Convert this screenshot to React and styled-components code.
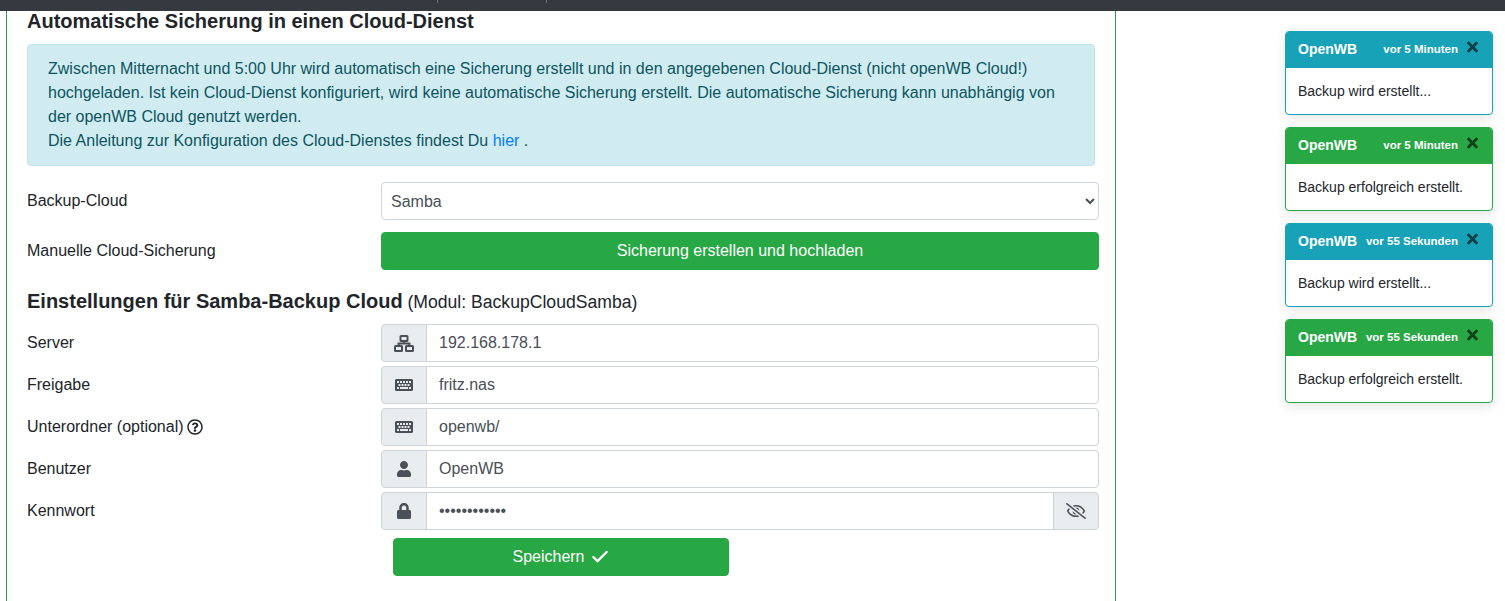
import React from 'react';
import styled, { createGlobalStyle } from 'styled-components';
import { FaKeyboard, FaUser, FaLock, FaRegEyeSlash, FaRegQuestionCircle, FaTimes } from 'react-icons/fa';
import { Check } from 'lucide-react';

const GlobalStyle = createGlobalStyle`
html, body {
  margin: 0;
  height: 100%;
  overflow: hidden;
  background: #fff;
  color: #212529;
  font-family: "Liberation Sans", Arial, sans-serif;
  font-size: 16px;
  line-height: 24px;
}
* { box-sizing: border-box; }
`
const TopBar = styled.div`
height: 11px;
background: #343a40;
display: flex;
align-items: flex-start;
`
const TopItem = styled.div`
width: ${props => props.width}px;
height: 3px;
border-right: 1px solid #6f7479;
`
const Card = styled.section`
margin-left: 6px;
width: 1110px;
height: 590px;
border-left: 1px solid #28a745;
border-right: 1px solid #28a745;
padding-left: 20px;
`
const Title = styled.h3`
margin: 0 0 13px;
font-size: 20px;
line-height: 20px;
font-weight: bold;
`
const Alert = styled.div`
width: 1068px;
padding: 12px 20px;
background: #d1ecf1;
border: 1px solid #bee5eb;
border-radius: 4px;
color: #0c5460;
margin-bottom: 16px;
a { color: #007bff; text-decoration: none; }
`
const FormRow = styled.div`
display: grid;
grid-template-columns: 354px 718px;
align-items: center;
margin-bottom: ${props => props.gap || 4}px;
`
const Label = styled.label`
display: flex;
align-items: center;
gap: 3px;
`
const Select = styled.select`
height: 38px;
width: 100%;
padding: 0 5px;
font: inherit;
color: #495057;
background: #fff;
border: 1px solid #ced4da;
border-radius: 4px;
`
const Button = styled.button`
height: 38px;
width: ${props => props.width || '100%'};
display: flex;
align-items: center;
justify-content: center;
gap: 5px;
font: inherit;
color: #fff;
background: #28a745;
border: 1px solid #28a745;
border-radius: 4px;
`
const SubTitle = styled.h4`
margin: 0 0 10px;
font-size: 17.6px;
line-height: 24px;
font-weight: normal;
b { font-size: 20px; line-height: 1; }
`
const InputGroup = styled.div`
display: flex;
height: 38px;
`
const Addon = styled.div`
width: 46px;
flex: none;
display: flex;
align-items: center;
justify-content: center;
color: #495057;
background: #e9ecef;
border: 1px solid #ced4da;
border-radius: ${props => props.right ? '0 4px 4px 0' : '4px 0 0 4px'};
margin-left: ${props => props.right ? '-1px' : '0'};
`
const Input = styled.input`
flex: 1;
min-width: 0;
margin-left: -1px;
padding: 0 12px;
font: inherit;
color: #495057;
background: #fff;
border: 1px solid #ced4da;
border-radius: ${props => props.middle ? '0' : '0 4px 4px 0'};
`
const SaveRow = styled.div`
padding-left: 366px;
margin-top: 8px;
`
const ToastList = styled.div`
position: absolute;
top: 31px;
left: 1285px;
width: 208px;
display: flex;
flex-direction: column;
gap: 12px;
`
const Toast = styled.div`
height: 84px;
background: #fff;
border: 1px solid ${props => props.color};
border-radius: 4px;
box-shadow: 0 4px 12px rgba(0, 0, 0, 0.1);
overflow: hidden;
font-size: 14px;
line-height: 21px;
`
const ToastHead = styled.div`
height: 36px;
background: ${props => props.color};
color: #fff;
display: flex;
align-items: center;
padding: 0 12px 1px;
strong { font-size: 14px; flex: 1; }
small { font-size: 11.5px; font-weight: bold; }
`
const Close = styled.span`
width: 15px;
margin-left: 7px;
margin-top: -6px;
display: flex;
justify-content: center;
color: #000;
opacity: 0.6;
font-size: 16px;
`
const ToastBody = styled.div`
padding: 13px 12px;
color: #212529;
`

const NetworkIcon = () => (
  <svg width="20" height="17" viewBox="0 0 20 17" fill="none" stroke="currentColor" strokeWidth="2">
    <rect x="6.5" y="1" width="7" height="5" rx="0.6" />
    <rect x="1" y="11" width="7" height="5" rx="0.6" />
    <rect x="12" y="11" width="7" height="5" rx="0.6" />
    <path d="M10 6V8.5M4.5 11V8.5H15.5V11" />
  </svg>
);

const toasts = [
  { color: '#17a2b8', time: 'vor 5 Minuten', text: 'Backup wird erstellt...' },
  { color: '#28a745', time: 'vor 5 Minuten', text: 'Backup erfolgreich erstellt.' },
  { color: '#17a2b8', time: 'vor 55 Sekunden', text: 'Backup wird erstellt...' },
  { color: '#28a745', time: 'vor 55 Sekunden', text: 'Backup erfolgreich erstellt.' },
];

const App = () => (
  <>
    <GlobalStyle />
    <TopBar>
      <TopItem width={438} />
      <TopItem width={109} />
    </TopBar>
    <Card>
      <Title>Automatische Sicherung in einen Cloud-Dienst</Title>
      <Alert>
        Zwischen Mitternacht und 5:00 Uhr wird automatisch eine Sicherung erstellt und in den angegebenen Cloud-Dienst (nicht openWB Cloud!) hochgeladen. Ist kein Cloud-Dienst konfiguriert, wird keine automatische Sicherung erstellt. Die automatische Sicherung kann unabhängig von der openWB Cloud genutzt werden.
        <br />
        Die Anleitung zur Konfiguration des Cloud-Dienstes findest Du <a href="#hier">hier</a> .
      </Alert>
      <FormRow gap={12}>
        <Label>Backup-Cloud</Label>
        <Select defaultValue="samba">
          <option value="samba">Samba</option>
        </Select>
      </FormRow>
      <FormRow gap={20}>
        <Label>Manuelle Cloud-Sicherung</Label>
        <Button>Sicherung erstellen und hochladen</Button>
      </FormRow>
      <SubTitle><b>Einstellungen für Samba-Backup Cloud</b> (Modul: BackupCloudSamba)</SubTitle>
      <FormRow>
        <Label>Server</Label>
        <InputGroup>
          <Addon><NetworkIcon /></Addon>
          <Input defaultValue="192.168.178.1" />
        </InputGroup>
      </FormRow>
      <FormRow>
        <Label>Freigabe</Label>
        <InputGroup>
          <Addon><FaKeyboard size={18} /></Addon>
          <Input defaultValue="fritz.nas" />
        </InputGroup>
      </FormRow>
      <FormRow>
        <Label>Unterordner (optional)<FaRegQuestionCircle size={16} /></Label>
        <InputGroup>
          <Addon><FaKeyboard size={18} /></Addon>
          <Input defaultValue="openwb/" />
        </InputGroup>
      </FormRow>
      <FormRow>
        <Label>Benutzer</Label>
        <InputGroup>
          <Addon><FaUser size={16} /></Addon>
          <Input defaultValue="OpenWB" />
        </InputGroup>
      </FormRow>
      <FormRow>
        <Label>Kennwort</Label>
        <InputGroup>
          <Addon><FaLock size={16} /></Addon>
          <Input middle type="password" defaultValue="openwbbackup" />
          <Addon right><FaRegEyeSlash size={20} /></Addon>
        </InputGroup>
      </FormRow>
      <SaveRow>
        <Button width="336px">Speichern <Check size={20} strokeWidth={2.8} /></Button>
      </SaveRow>
    </Card>
    <ToastList>
      {toasts.map((toast, i) => (
        <Toast key={i} color={toast.color}>
          <ToastHead color={toast.color}>
            <strong>OpenWB</strong>
            <small>{toast.time}</small>
            <Close><FaTimes /></Close>
          </ToastHead>
          <ToastBody>{toast.text}</ToastBody>
        </Toast>
      ))}
    </ToastList>
  </>
);

export default App;
